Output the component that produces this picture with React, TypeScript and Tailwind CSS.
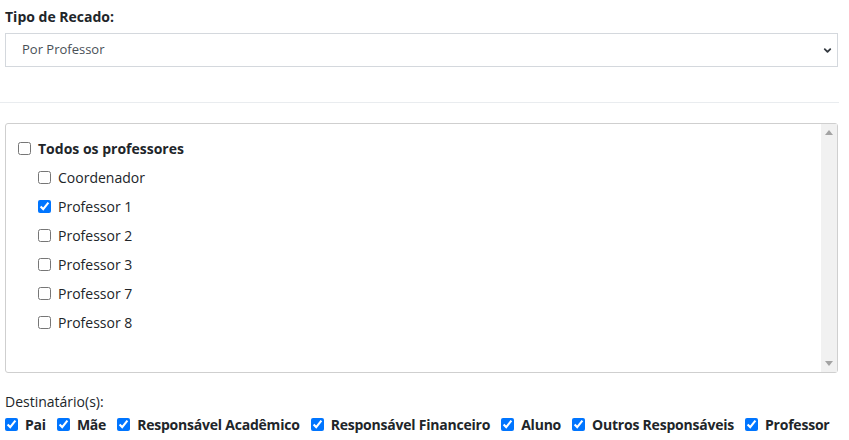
import { ChevronDown } from 'lucide-react';

const professores = [
  { nome: 'Coordenador', marcado: false },
  { nome: 'Professor 1', marcado: true },
  { nome: 'Professor 2', marcado: false },
  { nome: 'Professor 3', marcado: false },
  { nome: 'Professor 7', marcado: false },
  { nome: 'Professor 8', marcado: false },
];

const destinatarios = [
  'Pai',
  'Mãe',
  'Responsável Acadêmico',
  'Responsável Financeiro',
  'Aluno',
  'Outros Responsáveis',
  'Professor',
];

export default function App() {
  return (
    <div
      className="w-[849px] h-[440px] bg-white text-[#212529] overflow-hidden"
      style={{ fontFamily: '"Open Sans", "Noto Sans", sans-serif' }}
    >
      <div className="pl-[5px] pr-[11px] pt-[6px]">
        <label className="block text-[14px] leading-[21px] font-bold">Tipo de Recado:</label>

        <div className="relative mt-[6px]">
          <select
            defaultValue="professor"
            className="w-full h-[34px] appearance-none border border-[#d4d8dd] bg-white pl-[16px] text-[13px] text-[#495057] outline-none"
          >
            <option value="professor">Por Professor</option>
          </select>
          <ChevronDown
            className="pointer-events-none absolute right-[5px] top-[12px] w-[11px] h-[11px] text-[#343a40]"
            strokeWidth={4}
          />
        </div>
      </div>

      <hr className="mt-[35px] w-[839px] border-0 border-t border-[#e9ecef]" />

      <div className="pl-[5px] pr-[11px] mt-[20px]">
        <div className="flex h-[250px] rounded-[3px] border border-[#cfcfcf]">
          <div className="flex-1 pt-[12px] pl-[12px]">
            <label className="flex items-center h-[24px] gap-[7px] text-[14px] font-bold">
              <input type="checkbox" className="m-0 w-[13px] h-[13px]" />
              Todos os professores
            </label>
            <div className="pl-[20px] pt-[3px] flex flex-col">
              {professores.map((p) => (
                <label key={p.nome} className="flex items-center h-[29px] gap-[7px] text-[14px]">
                  <input
                    type="checkbox"
                    defaultChecked={p.marcado}
                    className="m-0 w-[13px] h-[13px]"
                  />
                  {p.nome}
                </label>
              ))}
            </div>
          </div>
          {/* scrollbar desenhado */}
          <div className="w-[16px] bg-[#f1f1f1] flex flex-col justify-between items-center py-[6px]">
            <svg width="8" height="5" viewBox="0 0 8 5">
              <path d="M0 5 L4 0 L8 5 Z" fill="#a3a3a3" />
            </svg>
            <svg width="8" height="5" viewBox="0 0 8 5">
              <path d="M0 0 L8 0 L4 5 Z" fill="#a3a3a3" />
            </svg>
          </div>
        </div>
      </div>

      <div className="px-[5px] mt-[18px]">
        <div className="text-[14px] leading-[21px]">Destinatário(s):</div>
        <div className="flex items-center h-[24px] whitespace-nowrap">
          {destinatarios.map((d) => (
            <label
              key={d}
              className="flex items-center gap-[7px] mr-[11px] text-[14px] font-bold tracking-[-0.22px]"
            >
              <input type="checkbox" defaultChecked className="m-0 w-[13px] h-[13px]" />
              {d}
            </label>
          ))}
        </div>
      </div>
    </div>
  );
}
